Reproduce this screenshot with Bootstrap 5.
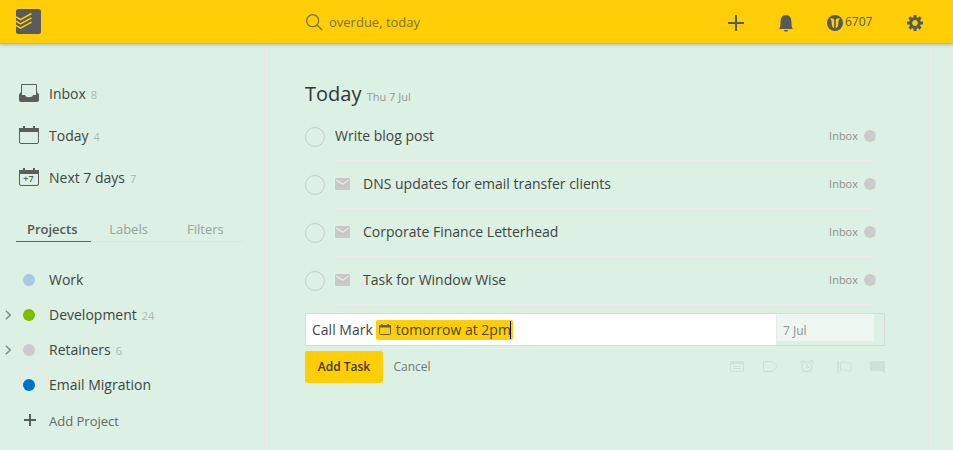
<!DOCTYPE html>
<html lang="en">
<head>
<meta charset="utf-8">
<meta name="viewport" content="width=device-width, initial-scale=1">
<title>Today</title>
<link href="https://cdn.jsdelivr.net/npm/bootstrap@5.3.0/dist/css/bootstrap.min.css" rel="stylesheet">
<style>
body{font-family:"Open Sans",sans-serif;font-size:14px;line-height:20px;background:#dcf0e3;color:#3d4641;height:450px;overflow:hidden}
svg{display:block;flex:none}
.topbar{height:44px;background:#ffce07;border-bottom:1px solid #eac004;box-shadow:0 1px 3px rgba(0,0,0,.22);z-index:2;position:relative;color:#555b55}
.brand-cell{width:306px;padding-left:16px}
.glass{margin-top:2px}
.query{font-size:13px;width:405px;padding-left:6px;color:#7c7130}
.bell{margin:3px 34px 0 35px}
.rank,.gear{margin-top:2px}
.karma{font-size:12px;width:62px;margin-left:2px;margin-top:1px}
.side{width:267px;border-right:1px solid #f0eaec;flex:none}
.filters{padding:29px 0 0 19px}
.filters li{height:42px;gap:10px}
.filters svg{margin-bottom:2px}
.cnt{font-size:11px;line-height:14px;color:#b0b8b2;margin-left:5px}
.tabs{margin:9px 21px 0 16px;height:34px;border-bottom:1px solid #e5e4e2;font-size:13px;color:#98a29b}
.tabs a{color:inherit;text-decoration:none;height:34px;padding-top:11px;text-align:center}
.tabs .on{color:#535a55;font-weight:600;border-bottom:1px solid #5f6561;width:76px;padding-right:3px}
.tabs .lb{width:75px}
.tabs .fl{width:80px}
.projects{padding-top:20px}
.projects li{height:35px}
.arrow{width:23px;padding-left:5px;flex:none}
.dot{width:12px;height:12px;border-radius:50%;flex:none}
.pname{margin-left:14px}
.addp{height:38px;padding-left:23px;font-size:13px;color:#626b65;gap:12px}
.main-col{width:664px;border-right:1px solid #f0eaec;padding:35px 45px 0 38px;flex:none}
.day{font-size:20px;line-height:30px;height:33px;color:#303733}
.day span{font-size:11px;color:#929b95}
.tasks li{height:48px;padding-right:9px}
.check{width:20px;height:20px;border:1px solid #c9cac8;border-radius:50%;margin-top:15px;flex:none}
.tbody{margin-left:10px;border-bottom:1px solid #f0eaec;height:49px;padding-bottom:1px}
.mail{margin-right:13px}
.where{font-size:11px;color:#89928c;gap:6px}
.editor{height:33px;margin-top:9px;border:1px solid #d9dbd8}
.entry{width:471px;background:#fff;padding-left:6px;border-right:1px solid #e9ebe8;color:#454545}
.chip{background:#ffce07;border-radius:2px;height:20px;margin-left:3px;padding:0 3px;width:137px;color:#4f4510;white-space:nowrap}
.chip svg{margin-right:5px}
.caret{width:1px;height:18px;background:#000;flex:none;margin-left:-1px}
.due{width:97px;height:27px;background:#edf6f1;font-size:12px;color:#8f9591;padding:7px 0 0 6px}
.actions{margin-top:5px}
.btn-add{background:#ffce07;color:#3f3a16;font-size:12px;font-weight:600;width:78px;height:32px;padding:0;border:0;border-radius:2px}
.btn-add:hover{background:#f5c400}
.cancel{font-size:12px;color:#717a74;text-decoration:none;margin-left:10.5px}
.tools{color:#cfe1d6}
.tools svg{margin-bottom:1px}
</style>
</head>
<body class="d-flex flex-column">
<header class="topbar d-flex align-items-center flex-shrink-0">
  <div class="brand-cell">
    <svg width="25" height="25" viewBox="0 0 25 25"><rect width="25" height="25" rx="2.5" fill="#5a5a58"/><path d="M0 7.8 4.500 10.600 15.500 4.500M0 12.100 4.500 14.900 15.500 8.800M0 16.400 4.500 19.200 15.500 13.100" fill="none" stroke="#ffce07" stroke-width="1.5"/></svg>
  </div>
  <svg class="glass" width="17" height="17" viewBox="0 0 17 17" fill="none" stroke="#7c7130" stroke-width="1.3"><circle cx="6.7" cy="6.7" r="6"/><path d="m11 11 5 5"/></svg>
  <div class="query">overdue, today</div>
  <div class="d-flex align-items-center">
    <svg class="glass" width="16" height="16" viewBox="0 0 16 16" stroke="currentColor" stroke-width="2"><path d="M8 0v16M0 8h16"/></svg>
    <svg width="14" height="17" viewBox="0 0 14 17" fill="currentColor" class="bell"><path d="M0 14c1-1 1.500-2.500 1.500-5.500C1.500 3 3 .5 5.500.2h3C11 .5 12.500 3 12.500 8.500c0 3 .5 4.500 1.500 5.500zM5 15h4c0 2-4 2-4 0z"/></svg>
    <svg class="rank" width="16" height="16" viewBox="0 0 16 16"><circle cx="8" cy="8" r="8" fill="currentColor"/><path d="M2.600 3.500H6.200L7.200 4.800v8.700C5.200 12.500 4.700 10.500 4.700 8 4.700 5.500 4.200 4.500 2.600 3.500zM13.400 3.500H9.800L8.800 4.800v8.700c2-1 2.500-3 2.500-5.500 0-2.500.5-3.500 2.100-4.500z" fill="#ffce07"/></svg>
    <span class="karma">6707</span>
    <svg class="gear" width="16" height="16" viewBox="-8 -8 16 16"><g stroke="currentColor" stroke-width="3"><path d="M0-8V-4M0 4V8M-8 0H-4M4 0H8M-5.600-5.600-3-3M3 3 5.600 5.600M-5.600 5.600-3 3M3-3 5.600-5.600"/></g><circle r="4.400" fill="none" stroke="currentColor" stroke-width="3"/></svg>
  </div>
</header>
<div class="d-flex flex-grow-1">
  <nav class="side">
    <ul class="filters list-unstyled m-0">
      <li class="d-flex align-items-center"><svg width="20" height="18" viewBox="0 0 20 18"><path d="M2.500 11V.5h15V11" fill="none" stroke="#5b5f5c"/><path d="M0 10.500 1.500 8.500h1v2.500H6c.5 3 7.500 3 8 0h3.500V8.500h1l1.500 2V16q0 2-2 2H2q-2 0-2-2z" fill="#5b5f5c"/></svg><span>Inbox<span class="cnt">8</span></span></li>
      <li class="d-flex align-items-center"><svg width="20" height="18" viewBox="0 0 20 18"><rect x=".5" y="2.500" width="19" height="15" rx="1.500" fill="none" stroke="#5b5f5c"/><path d="M0 6V2h4V0h2v2h8V0h2v2h4v4z" fill="#5b5f5c"/></svg><span>Today<span class="cnt">4</span></span></li>
      <li class="d-flex align-items-center"><svg width="20" height="18" viewBox="0 0 20 18"><rect x=".5" y="2.500" width="19" height="15" rx="1.500" fill="none" stroke="#5b5f5c"/><path d="M0 6V2h4V0h2v2h8V0h2v2h4v4z" fill="#5b5f5c"/><text x="4.300" y="14" font-size="9" font-weight="600" fill="#5b5f5c">+7</text></svg><span>Next 7 days<span class="cnt">7</span></span></li>
    </ul>
    <div class="tabs d-flex"><a class="on" href="#">Projects</a><a class="lb" href="#">Labels</a><a class="fl" href="#">Filters</a></div>
    <ul class="projects list-unstyled m-0">
      <li class="d-flex align-items-center"><span class="arrow"></span><span class="dot" style="background:#a8c8e4"></span><span class="pname">Work</span></li>
      <li class="d-flex align-items-center"><span class="arrow"><svg width="7" height="10" viewBox="0 0 7 10" fill="none" stroke="#858c87" stroke-width="1.500"><path d="m.8.8 4.400 4.200L.8 9.200"/></svg></span><span class="dot" style="background:#7ebc00"></span><span class="pname">Development<span class="cnt">24</span></span></li>
      <li class="d-flex align-items-center"><span class="arrow"><svg width="7" height="10" viewBox="0 0 7 10" fill="none" stroke="#858c87" stroke-width="1.500"><path d="m.8.8 4.400 4.200L.8 9.200"/></svg></span><span class="dot" style="background:#cbcbcb"></span><span class="pname">Retainers<span class="cnt">6</span></span></li>
      <li class="d-flex align-items-center"><span class="arrow"></span><span class="dot" style="background:#0073c8"></span><span class="pname">Email Migration</span></li>
    </ul>
    <div class="addp d-flex align-items-center"><svg width="14" height="14" viewBox="0 0 14 14" stroke="#565e59" stroke-width="2"><path d="M7 0v12M1 6h12"/></svg><span>Add Project</span></div>
  </nav>
  <main class="main-col">
    <div class="day">Today <span>Thu 7 Jul</span></div>
    <ul class="tasks list-unstyled m-0">
      <li class="d-flex"><span class="check"></span><div class="tbody d-flex flex-grow-1 align-items-center"><span>Write blog post</span><span class="where d-flex align-items-center ms-auto">Inbox<span class="dot" style="background:#cbcbcb"></span></span></div></li>
      <li class="d-flex"><span class="check"></span><div class="tbody d-flex flex-grow-1 align-items-center"><svg class="mail" width="15" height="12" viewBox="0 0 15 12"><rect width="15" height="12" rx="1.500" fill="#c7c8c7"/><path d="m1.300 2 6.200 4.200L13.700 2" fill="none" stroke="#dcf0e3" stroke-width="1.300"/></svg><span>DNS updates for email transfer clients</span><span class="where d-flex align-items-center ms-auto">Inbox<span class="dot" style="background:#cbcbcb"></span></span></div></li>
      <li class="d-flex"><span class="check"></span><div class="tbody d-flex flex-grow-1 align-items-center"><svg class="mail" width="15" height="12" viewBox="0 0 15 12"><rect width="15" height="12" rx="1.500" fill="#c7c8c7"/><path d="m1.300 2 6.200 4.200L13.700 2" fill="none" stroke="#dcf0e3" stroke-width="1.300"/></svg><span>Corporate Finance Letterhead</span><span class="where d-flex align-items-center ms-auto">Inbox<span class="dot" style="background:#cbcbcb"></span></span></div></li>
      <li class="d-flex"><span class="check"></span><div class="tbody d-flex flex-grow-1 align-items-center"><svg class="mail" width="15" height="12" viewBox="0 0 15 12"><rect width="15" height="12" rx="1.500" fill="#c7c8c7"/><path d="m1.300 2 6.200 4.200L13.700 2" fill="none" stroke="#dcf0e3" stroke-width="1.300"/></svg><span>Task for Window Wise</span><span class="where d-flex align-items-center ms-auto">Inbox<span class="dot" style="background:#cbcbcb"></span></span></div></li>
    </ul>
    <div class="editor d-flex">
      <div class="entry d-flex align-items-center"><span>Call Mark</span><span class="chip d-flex align-items-center"><svg width="12" height="11" viewBox="0 0 12 11"><rect x=".5" y="1.500" width="11" height="9" rx="1" fill="none" stroke="#5b5f5c"/><path d="M0 3.500V1.500h2V0h1.500v1.500h5V0H10v1.500h2v2z" fill="#5b5f5c"/></svg><span>tomorrow at 2pm</span><span class="caret"></span></span></div>
      <div class="due">7 Jul</div>
    </div>
    <div class="actions d-flex align-items-center">
      <button class="btn btn-add" type="button">Add Task</button>
      <a class="cancel" href="#">Cancel</a>
      <div class="tools d-flex align-items-center ms-auto">
        <svg width="156" height="14" viewBox="0 0 156 14" fill="none" stroke="currentColor">
          <rect x="1.500" y="1.500" width="13" height="10" rx="1"/><path d="M1 2.500h14" stroke-width="2.500"/><path d="M4 6.500h8M4 8.500h8"/>
          <path d="M34.500 1.500h9l4.500 5-4.500 5h-9z" stroke-linejoin="round"/>
          <circle cx="78" cy="6.800" r="5" stroke-width="1.500"/><path d="M78 3.500v4h3M71 3.500q1-3 4-3M85 3.500q-1-3-4-3" stroke-width="1.500"/><path d="m74.500 11-2 2m9-2 2 2"/>
          <path d="M109 1v12" stroke-width="1.500"/><path d="M111.500 2.500q3-1.500 5 0t5.500 0v8q-3 1.500-5 0t-5.500 0z"/>
          <path d="M141 1h15v13l-3-3h-12z" fill="currentColor" stroke="none"/>
        </svg>
      </div>
    </div>
  </main>
</div>
<script src="https://cdn.jsdelivr.net/npm/bootstrap@5.3.0/dist/js/bootstrap.bundle.min.js"></script>
</body>
</html>
